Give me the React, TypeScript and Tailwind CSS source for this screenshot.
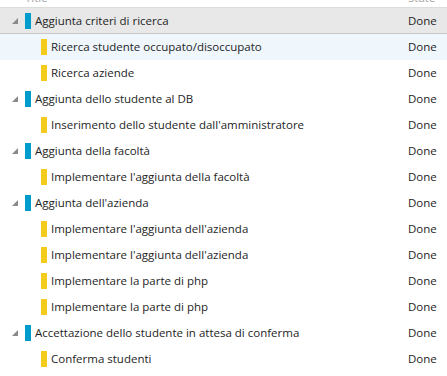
type Row = {
  title: string;
  state: string;
  level: 0 | 1;
};

const rows: Row[] = [
  { title: "Aggiunta criteri di ricerca", state: "Done", level: 0 },
  { title: "Ricerca studente occupato/disoccupato", state: "Done", level: 1 },
  { title: "Ricerca aziende", state: "Done", level: 1 },
  { title: "Aggiunta dello studente al DB", state: "Done", level: 0 },
  { title: "Inserimento dello studente dall'amministratore", state: "Done", level: 1 },
  { title: "Aggiunta della facoltà", state: "Done", level: 0 },
  { title: "Implementare l'aggiunta della facoltà", state: "Done", level: 1 },
  { title: "Aggiunta dell'azienda", state: "Done", level: 0 },
  { title: "Implementare l'aggiunta dell'azienda", state: "Done", level: 1 },
  { title: "Implementare l'aggiunta dell'azienda", state: "Done", level: 1 },
  { title: "Implementare la parte di php", state: "Done", level: 1 },
  { title: "Implementare la parte di php", state: "Done", level: 1 },
  { title: "Accettazione dello studente in attesa di conferma", state: "Done", level: 0 },
  { title: "Conferma studenti", state: "Done", level: 1 },
];

// little filled corner triangle used for expanded parents
const Expander = () => (
  <svg width="6" height="6" viewBox="0 0 6 6" className="shrink-0">
    <polygon points="6,0 6,6 0,6" fill="#8a8a8a" />
  </svg>
);

export default function App() {
  return (
    <div
      className="w-[447px] h-[376px] overflow-hidden bg-white text-[11.5px] text-[#1e1e1e]"
      style={{ fontFamily: '"Segoe UI", "Open Sans", sans-serif' }}
    >
      <div className="grid grid-cols-[408px_1fr] h-[8px] overflow-hidden border-b border-[#dcdcdc] text-[#a6a6a6]">
        <div className="pl-[25px] -mt-[10px] leading-[16px]">Title</div>
        <div className="-mt-[10px] leading-[16px]">State</div>
      </div>
      {rows.map((r, i) => (
        <div
          key={i}
          className={`grid grid-cols-[408px_1fr] h-[26px] items-center ${
            i === 0
              ? "bg-[#e8e8e8] border-b border-[#c8c8c8]"
              : i === 1
              ? "bg-[#eff6fc]"
              : ""
          }`}
        >
          <div className="flex items-center min-w-0">
            {r.level === 0 ? (
              <>
                <div className="w-[25px] pl-[12px] flex items-center">
                  <Expander />
                </div>
                <div className="w-[6px] h-[16px] bg-[#009ccc] shrink-0" />
              </>
            ) : (
              <>
                <div className="w-[41px] shrink-0" />
                <div className="w-[6px] h-[16px] bg-[#f2cb1d] shrink-0" />
              </>
            )}
            <span className="pl-[4px] truncate">{r.title}</span>
          </div>
          <div>{r.state}</div>
        </div>
      ))}
    </div>
  );
}
